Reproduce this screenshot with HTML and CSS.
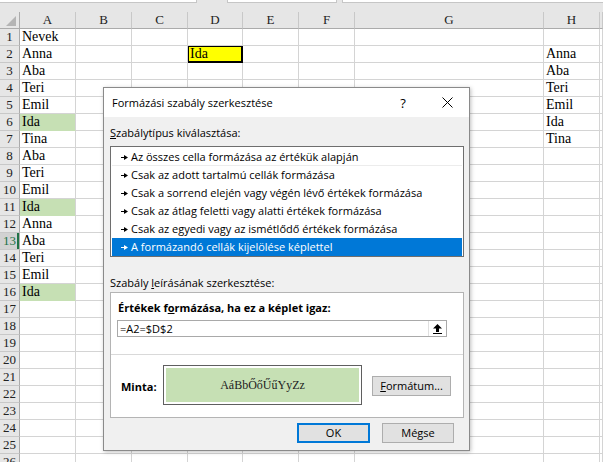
FILE: index.html
```html
<!DOCTYPE html>
<html lang="hu">
<head>
<meta charset="utf-8">
<title>Formázási szabály szerkesztése</title>
<link rel="stylesheet" href="styles.css">
</head>
<body>
<div class="topbar">
  <div class="tb tb1"></div>
  <div class="tb-gap tb-gap1"></div>
  <div class="tb tb2"></div>
  <div class="tb-gap tb-gap2"></div>
  <div class="tb tb3"></div>
</div>
<div class="sheet">
  <div class="r hr"><span class="corner"><svg width="12" height="12" viewBox="0 0 12 12"><polygon points="11,1 11,11 1,11" fill="#b4b4b4"/></svg></span><span>A</span><span>B</span><span>C</span><span>D</span><span>E</span><span>F</span><span>G</span><span>H</span><span></span></div>
  <div class="r"><span class="h">1</span><span>Nevek</span><span></span><span></span><span></span><span></span><span></span><span></span><span></span><span></span></div>
  <div class="r"><span class="h">2</span><span>Anna</span><span></span><span></span><span class="y">Ida</span><span></span><span></span><span></span><span>Anna</span><span></span></div>
  <div class="r"><span class="h">3</span><span>Aba</span><span></span><span></span><span></span><span></span><span></span><span></span><span>Aba</span><span></span></div>
  <div class="r"><span class="h">4</span><span>Teri</span><span></span><span></span><span></span><span></span><span></span><span></span><span>Teri</span><span></span></div>
  <div class="r"><span class="h">5</span><span>Emil</span><span></span><span></span><span></span><span></span><span></span><span></span><span>Emil</span><span></span></div>
  <div class="r"><span class="h">6</span><span class="g">Ida</span><span></span><span></span><span></span><span></span><span></span><span></span><span>Ida</span><span></span></div>
  <div class="r"><span class="h">7</span><span>Tina</span><span></span><span></span><span></span><span></span><span></span><span></span><span>Tina</span><span></span></div>
  <div class="r"><span class="h">8</span><span>Aba</span><span></span><span></span><span></span><span></span><span></span><span></span><span></span><span></span></div>
  <div class="r"><span class="h">9</span><span>Teri</span><span></span><span></span><span></span><span></span><span></span><span></span><span></span><span></span></div>
  <div class="r"><span class="h">10</span><span>Emil</span><span></span><span></span><span></span><span></span><span></span><span></span><span></span><span></span></div>
  <div class="r"><span class="h">11</span><span class="g">Ida</span><span></span><span></span><span></span><span></span><span></span><span></span><span></span><span></span></div>
  <div class="r"><span class="h">12</span><span>Anna</span><span></span><span></span><span></span><span></span><span></span><span></span><span></span><span></span></div>
  <div class="r"><span class="h act">13</span><span>Aba</span><span></span><span></span><span></span><span></span><span></span><span></span><span></span><span></span></div>
  <div class="r"><span class="h">14</span><span>Teri</span><span></span><span></span><span></span><span></span><span></span><span></span><span></span><span></span></div>
  <div class="r"><span class="h">15</span><span>Emil</span><span></span><span></span><span></span><span></span><span></span><span></span><span></span><span></span></div>
  <div class="r"><span class="h">16</span><span class="g">Ida</span><span></span><span></span><span></span><span></span><span></span><span></span><span></span><span></span></div>
  <div class="r"><span class="h">17</span><span></span><span></span><span></span><span></span><span></span><span></span><span></span><span></span><span></span></div>
  <div class="r"><span class="h">18</span><span></span><span></span><span></span><span></span><span></span><span></span><span></span><span></span><span></span></div>
  <div class="r"><span class="h">19</span><span></span><span></span><span></span><span></span><span></span><span></span><span></span><span></span><span></span></div>
  <div class="r"><span class="h">20</span><span></span><span></span><span></span><span></span><span></span><span></span><span></span><span></span><span></span></div>
  <div class="r"><span class="h">21</span><span></span><span></span><span></span><span></span><span></span><span></span><span></span><span></span><span></span></div>
  <div class="r"><span class="h">22</span><span></span><span></span><span></span><span></span><span></span><span></span><span></span><span></span><span></span></div>
  <div class="r"><span class="h">23</span><span></span><span></span><span></span><span></span><span></span><span></span><span></span><span></span><span></span></div>
  <div class="r"><span class="h">24</span><span></span><span></span><span></span><span></span><span></span><span></span><span></span><span></span><span></span></div>
  <div class="r"><span class="h">25</span><span></span><span></span><span></span><span></span><span></span><span></span><span></span><span></span><span></span></div>
  <div class="r"><span class="h">26</span><span></span><span></span><span></span><span></span><span></span><span></span><span></span><span></span><span></span></div>
</div>

<div class="dlg">
  <div class="title">
    <span class="ttl">Formázási szabály szerkesztése</span>
    <span class="tbtn help">?</span>
    <span class="tbtn close"><svg width="11" height="11" viewBox="0 0 11 11"><path d="M0.5 0.5L10.5 10.5M10.5 0.5L0.5 10.5" stroke="#000" stroke-width="1"/></svg></span>
  </div>
  <div class="body">
    <div class="lbl lbl1"><u>S</u>zabálytípus kiválasztása:</div>
    <ul class="list">
      <li><svg class="arr" width="7" height="5" viewBox="0 0 7 5"><path d="M0 2.5H4" stroke="currentColor" stroke-width="1"/><polygon points="3,0 7,2.5 3,5" fill="currentColor"/></svg>Az összes cella formázása az értékük alapján</li>
      <li><svg class="arr" width="7" height="5" viewBox="0 0 7 5"><path d="M0 2.5H4" stroke="currentColor" stroke-width="1"/><polygon points="3,0 7,2.5 3,5" fill="currentColor"/></svg>Csak az adott tartalmú cellák formázása</li>
      <li><svg class="arr" width="7" height="5" viewBox="0 0 7 5"><path d="M0 2.5H4" stroke="currentColor" stroke-width="1"/><polygon points="3,0 7,2.5 3,5" fill="currentColor"/></svg>Csak a sorrend elején vagy végén lévő értékek formázása</li>
      <li><svg class="arr" width="7" height="5" viewBox="0 0 7 5"><path d="M0 2.5H4" stroke="currentColor" stroke-width="1"/><polygon points="3,0 7,2.5 3,5" fill="currentColor"/></svg>Csak az átlag feletti vagy alatti értékek formázása</li>
      <li><svg class="arr" width="7" height="5" viewBox="0 0 7 5"><path d="M0 2.5H4" stroke="currentColor" stroke-width="1"/><polygon points="3,0 7,2.5 3,5" fill="currentColor"/></svg>Csak az egyedi vagy az ismétlődő értékek formázása</li>
      <li class="sel"><svg class="arr" width="7" height="5" viewBox="0 0 7 5"><path d="M0 2.5H4" stroke="currentColor" stroke-width="1"/><polygon points="3,0 7,2.5 3,5" fill="currentColor"/></svg>A formázandó cellák kijelölése képlettel</li>
    </ul>
    <div class="lbl lbl2">Szabály <u>l</u>eírásának szerkesztése:</div>
    <div class="desc">
      <div class="desc-top">
        <div class="blabel">Értékek f<u>o</u>rmázása, ha ez a képlet igaz:</div>
        <div class="input">
          <span class="val">=A2=$D$2</span>
          <span class="collapse"><svg width="9" height="10" viewBox="0 0 9 10"><polygon points="4.5,0 9,4.5 6,4.5 6,8 3,8 3,4.5 0,4.5" fill="#000"/><rect x="0" y="9" width="9" height="1" fill="#000"/></svg></span>
        </div>
      </div>
      <div class="desc-bottom">
        <span class="minta">Minta:</span>
        <div class="preview">AáBbŐőŰűYyZz</div>
        <button class="btn fmt"><u>F</u>ormátum...</button>
      </div>
    </div>
    <div class="actions">
      <button class="btn ok">OK</button>
      <button class="btn cancel">Mégse</button>
    </div>
  </div>
</div>
</body>
</html>
```
FILE: styles.css
```css
* { box-sizing: border-box; }
html, body { margin: 0; padding: 0; }
body {
  width: 603px;
  height: 462px;
  overflow: hidden;
  position: relative;
  background: #fff;
  font-family: "Liberation Serif", "Times New Roman", serif;
  color: #000;
}

/* top strip (formula bar remnant) */
.topbar {
  height: 12px;
  background: #e6e6e6;
  display: flex;
  align-items: flex-start;
}
.tb {
  height: 3px;
  background: #fff;
  border: 1px solid #c6c6c6;
  border-top: 0;
}
.tb1 { width: 197px; border-left: 0; }
.tb-gap1 { width: 30px; }
.tb2 { width: 110px; }
.tb-gap2 { width: 5px; }
.tb3 { flex: 1; border-right: 0; }

/* sheet grid */
.r {
  display: grid;
  grid-template-columns: 20px 56px 56px 56px 55px 56px 56px 189px 56px 1fr;
  height: 17px;
}
.r > span {
  display: block;
  border-right: 1px solid #d4d4d4;
  border-bottom: 1px solid #d4d4d4;
  font-size: 14px;
  line-height: 16px;
  padding-left: 2px;
  white-space: nowrap;
  overflow: hidden;
}
.r > .h {
  background: #e6e6e6;
  border-right-color: #ababab;
  border-bottom-color: #c8c8c8;
  text-align: center;
  padding: 0;
  font-size: 13px;
  color: #222;
}
.r > .h.act {
  background: #d2d2d2;
  color: #217346;
  box-shadow: inset -2px 0 0 #217346;
}
.hr > span {
  background: #e6e6e6;
  border-right-color: #c8c8c8;
  border-bottom-color: #ababab;
  text-align: center;
  padding: 0;
  font-size: 13px;
  color: #222;
}
.hr > .corner {
  border-right-color: #ababab;
  position: relative;
}
.corner svg { position: absolute; right: 2px; bottom: 1px; }
.r > .g {
  background: #c6e0b4;
  border-bottom-color: #c6e0b4;
}
.r > .y {
  background: #ffff00;
  box-shadow: inset 0 0 0 1px #000;
  border-color: #000;
}

/* dialog */
.dlg {
  position: absolute;
  left: 103px;
  top: 87px;
  width: 367px;
  height: 364px;
  border: 1px solid #8a8a8a;
  background: #f0f0f0;
  box-shadow: 1px 1px 4px rgba(0,0,0,0.25);
  font-family: "Open Sans", "Noto Sans", sans-serif;
  font-size: 11px;
  color: #000;
  display: flex;
  flex-direction: column;
}
.title {
  height: 29px;
  background: #fff;
  display: flex;
  align-items: center;
  padding-left: 8px;
}
.ttl { flex: 1; font-size: 11px; }
.tbtn {
  width: 44px;
  height: 29px;
  display: flex;
  align-items: center;
  justify-content: center;
}
.help { font-size: 13px; }
.body {
  flex: 1;
  padding: 0 5px 0 6px;
  display: flex;
  flex-direction: column;
}
.lbl { line-height: 16px; height: 16px; }
.lbl1 { margin-top: 8px; margin-bottom: 5px; }
.lbl2 { margin-top: 18px; margin-bottom: 1px; }
.list {
  list-style: none;
  margin: 0;
  padding: 1px 1px 0 1px;
  background: #fff;
  border: 1px solid #6e6e6e;
  height: 111px;
}
.list li {
  height: 18px;
  line-height: 18px;
  padding-left: 9px;
  display: flex;
  align-items: center;
  white-space: nowrap;
}
.list li:first-child { box-shadow: inset 0 -1px 0 #ececec; }
.list .arr { margin-right: 3px; flex: none; }
.list li.sel { background: #0078d7; color: #fff; }
.desc {
  height: 126px;
  background: #fff;
  border: 1px solid #b4b4b4;
  display: flex;
  flex-direction: column;
}
.desc-top {
  height: 62px;
  border-bottom: 1px solid #d9d9d9;
  padding: 7px 0 0 0;
}
.blabel {
  font-weight: 700;
  line-height: 16px;
  padding-left: 7px;
}
.input {
  margin: 4px 0 0 6px;
  width: 330px;
  height: 17px;
  border: 1px solid #a9a9a9;
  display: flex;
  align-items: stretch;
}
.val { flex: 1; line-height: 15px; padding-left: 2px; }
.collapse {
  width: 18px;
  border-left: 1px solid #e0e0e0;
  display: flex;
  align-items: center;
  justify-content: center;
}
.desc-bottom {
  flex: 1;
  display: flex;
  align-items: center;
  padding-left: 10px;
}
.minta { font-weight: 700; width: 42px; }
.preview {
  width: 199px;
  height: 40px;
  border: 1px solid #5f5f5f;
  box-shadow: inset 0 0 0 2px #fff;
  background: #c6e0b4;
  display: flex;
  align-items: center;
  justify-content: center;
  font-family: "Liberation Serif", "Times New Roman", serif;
  font-size: 12px;
  color: #222;
  margin-top: -2px;
}
.btn {
  font-family: "Open Sans", "Noto Sans", sans-serif;
  font-size: 11px;
  color: #000;
  background: #e1e1e1;
  border: 1px solid #adadad;
  height: 20px;
  padding: 0;
  line-height: 18px;
}
.fmt { width: 79px; margin-left: 10px; }
.actions {
  display: flex;
  justify-content: flex-end;
  gap: 12px;
  padding-right: 10px;
  margin-top: 5px;
}
.ok { width: 73px; border: 2px solid #0078d7; line-height: 16px; }
.cancel { width: 72px; }
```
